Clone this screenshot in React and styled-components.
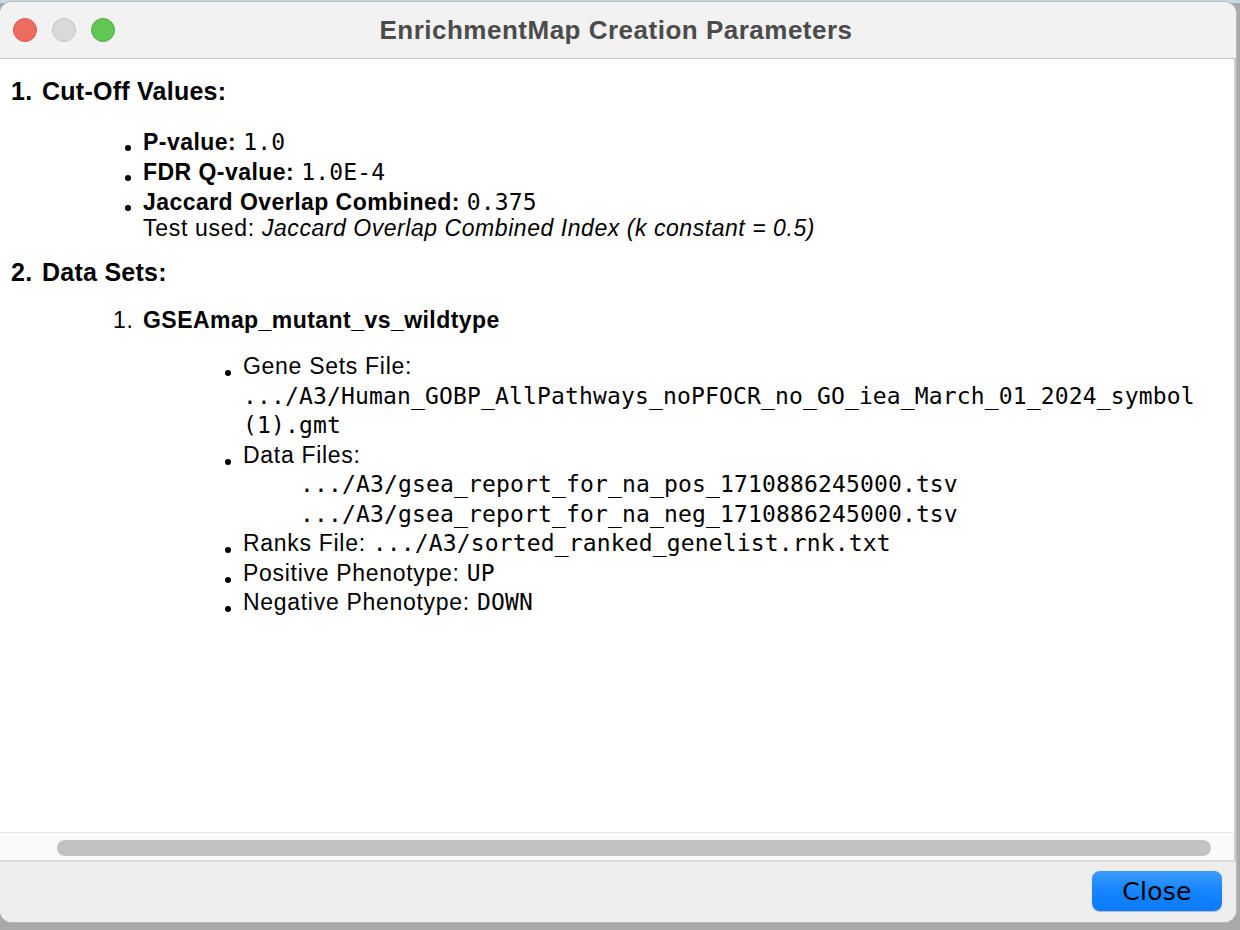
import React from 'react';
import styled, { createGlobalStyle } from 'styled-components';

/*----------  Globals  ----------*/

const GlobalStyle = createGlobalStyle`
  html, body {
    margin: 0;
    padding: 0;
  }
  body {
    background: linear-gradient(to bottom, #c7d9e4 0, #c7d9e4 3px, #a9a9a9 3px);
    width: 1240px;
    height: 930px;
    overflow: hidden;
  }
`;

const SANS = '"Liberation Sans", Arial, Helvetica, sans-serif';
const MONO = '"DejaVu Sans Mono", "Liberation Mono", monospace';


/*============================================
=            App                            =
============================================*/

const App = () => (
  <>
    <GlobalStyle />
    <Window>
      <TitleBar>
        <Lights>
          <Light fill='#ee6b60' edge='#d9564b' />
          <Light fill='#d9d9d9' edge='#c3c3c3' />
          <Light fill='#62c655' edge='#4fae44' />
        </Lights>
        <Title>EnrichmentMap Creation Parameters</Title>
      </TitleBar>

      <Content>
        <Heading num='1.'>Cut-Off Values:</Heading>
        <BulletList indent={ 143 } lineHeight={ 30 }>
          <Bullet><Label>P-value:</Label> <Mono>1.0</Mono></Bullet>
          <Bullet><Label>FDR Q-value:</Label> <Mono>1.0E-4</Mono></Bullet>
          <Bullet>
            <Label>Jaccard Overlap Combined:</Label> <Mono>0.375</Mono>
            <TestLine>
              Test used: <em>Jaccard Overlap Combined Index (k constant = 0.5)</em>
            </TestLine>
          </Bullet>
        </BulletList>

        <Heading num='2.' gap={ 18 }>Data Sets:</Heading>
        <DataSet>
          <DataSetNum>1.</DataSetNum>
          <Label>GSEAmap_mutant_vs_wildtype</Label>
        </DataSet>
        <BulletList indent={ 243 } lineHeight={ 29.5 } top={ 17 }>
          <Bullet>
            Gene Sets File:
            <br />
            <Mono>.../A3/Human_GOBP_AllPathways_noPFOCR_no_GO_iea_March_01_2024_symbol</Mono>
            <br />
            <Mono>(1).gmt</Mono>
          </Bullet>
          <Bullet>
            Data Files:
            <FilePath>.../A3/gsea_report_for_na_pos_1710886245000.tsv</FilePath>
            <FilePath>.../A3/gsea_report_for_na_neg_1710886245000.tsv</FilePath>
          </Bullet>
          <Bullet>Ranks File: <Mono>.../A3/sorted_ranked_genelist.rnk.txt</Mono></Bullet>
          <Bullet>Positive Phenotype: <Mono>UP</Mono></Bullet>
          <Bullet>Negative Phenotype: <Mono>DOWN</Mono></Bullet>
        </BulletList>
      </Content>

      <ScrollTrack>
        <ScrollThumb />
      </ScrollTrack>

      <Footer>
        <CloseButton type='button'>Close</CloseButton>
      </Footer>
    </Window>
  </>
);

export default App;

/*=====  End of App  ======*/


/*----------  Heading  ----------*/

const Heading = ({ num, gap, children }) => (
  <HeadingRow gap={ gap }>
    <span>{ num }</span>
    <span>{ children }</span>
  </HeadingRow>
);


/*----------  Window chrome  ----------*/

const Window = styled.div`
  margin-top: 2px;
  width: 1236px;
  height: 920px;
  border-radius: 12px;
  overflow: hidden;
  background: #eeeeee;
  box-shadow: 0 0 0 1px #b9b9b9;
  display: flex;
  flex-direction: column;
`;

const TitleBar = styled.div`
  position: relative;
  height: 56px;
  flex: none;
  background: #f2f2f2;
  border-bottom: 1px solid #c6c6c6;
  display: flex;
  align-items: center;
  justify-content: center;
`;

const Lights = styled.div`
  position: absolute;
  left: 13px;
  top: 16px;
  display: flex;
  gap: 15px;
`;

const Light = styled.span`
  width: 24px;
  height: 24px;
  box-sizing: border-box;
  border-radius: 50%;
  background: ${ ({ fill }) => fill };
  border: 1px solid ${ ({ edge }) => edge };
`;

const Title = styled.div`
  font-family: ${ SANS };
  font-weight: 700;
  font-size: 26px;
  letter-spacing: 0.5px;
  color: #4b4b4b;
  margin-left: -4px;
`;


/*----------  Content  ----------*/

const Content = styled.div`
  flex: none;
  height: 773px;
  box-sizing: border-box;
  background: #ffffff;
  border-right: 2px solid #cdcdcd;
  padding: 17px 0 0 11px;
  font-family: ${ SANS };
  font-size: 23px;
  letter-spacing: 0.7px;
  color: #000;
  white-space: nowrap;
  overflow: hidden;
`;

const HeadingRow = styled.div`
  display: grid;
  grid-template-columns: 31px auto;
  margin-top: ${ ({ gap }) => gap || 0 }px;
  height: 30px;
  line-height: 30px;
  font-size: 25px;
  font-weight: 700;
  letter-spacing: 0.25px;
  color: #000;
`;

const BulletList = styled.ul`
  list-style: none;
  margin: ${ ({ top }) => (top === undefined ? 21 : top) }px 0 0;
  padding: 0 0 0 ${ ({ indent }) => indent - 11 }px;
  line-height: ${ ({ lineHeight }) => lineHeight }px;
`;

const Bullet = styled.li`
  position: relative;

  &::before {
    content: '';
    position: absolute;
    left: -18px;
    top: 18px;
    width: 6px;
    height: 6px;
    border-radius: 50%;
    background: #000;
  }
`;

const Label = styled.b`
  font-weight: 700;
  letter-spacing: 0.45px;
  color: #000;
`;

const Mono = styled.span`
  font-family: ${ MONO };
  font-size: 23px;
  letter-spacing: 0.15px;
  color: #000;
`;

const TestLine = styled.div`
  line-height: 22px;

  em {
    font-style: italic;
    letter-spacing: 0.55px;
  }
`;

const FilePath = styled(Mono)`
  display: block;
  padding-left: 57px;
`;

const DataSet = styled.div`
  display: flex;
  margin-top: 18px;
  padding-left: 102px;
  height: 30px;
  line-height: 30px;
  color: #000;
`;

const DataSetNum = styled.span`
  width: 30px;
`;


/*----------  Scroll bar  ----------*/

const ScrollTrack = styled.div`
  flex: none;
  height: 30px;
  box-sizing: border-box;
  background: #fafafa;
  border-top: 1px solid #e4e4e4;
  border-bottom: 2px solid #dcdcdc;
  border-right: 2px solid #cdcdcd;
  padding: 7px 23px 0 57px;
`;

const ScrollThumb = styled.div`
  height: 16px;
  border-radius: 8px;
  background: #c2c2c2;
`;


/*----------  Footer  ----------*/

const Footer = styled.div`
  flex: 1;
  display: flex;
  justify-content: flex-end;
  align-items: flex-start;
  padding: 9px 14px 0 0;
  background: #eeeeee;
`;

const CloseButton = styled.button`
  width: 130px;
  height: 40px;
  border: none;
  border-radius: 8px;
  background: linear-gradient(to bottom, #3c9cfd 0%, #1684fd 50%, #0a7bfb 100%);
  box-shadow: 0 0.5px 1px rgba(0, 0, 0, 0.25);
  font-family: "DejaVu Sans", "Liberation Sans", sans-serif;
  font-size: 25px;
  letter-spacing: 0.3px;
  color: #000;
  padding: 0;
  cursor: default;
`;
